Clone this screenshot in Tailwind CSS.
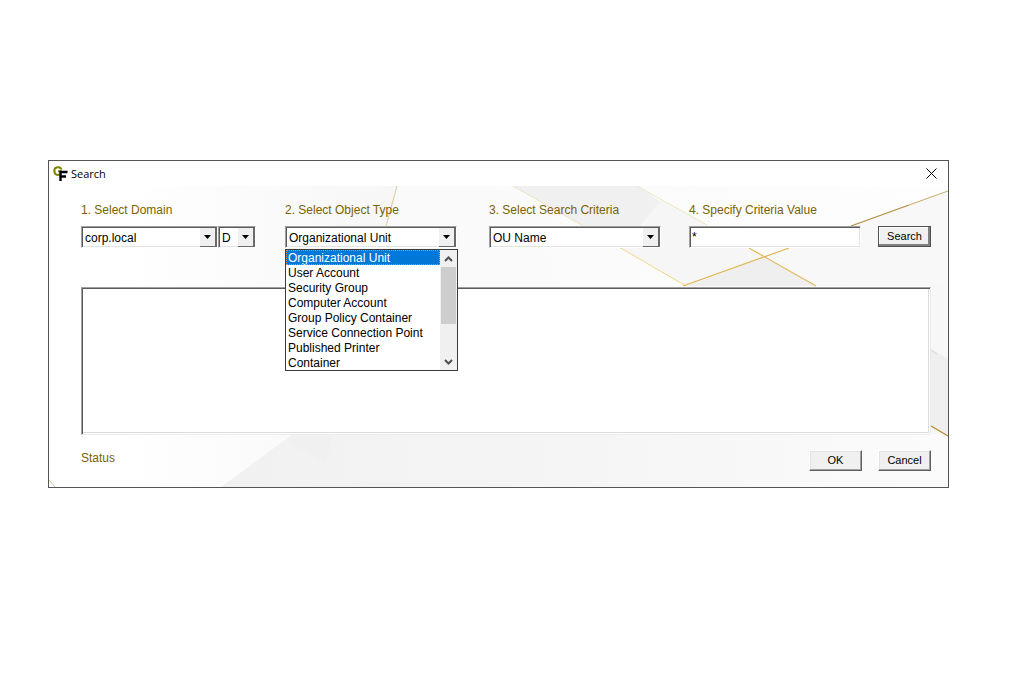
<!doctype html>
<html lang="en">
  <head>
    <meta charset="UTF-8" />
    <meta name="viewport" content="width=device-width, initial-scale=1.0" />
    <title>Search</title>
    <script src="https://cdn.jsdelivr.net/npm/@tailwindcss/browser@4"></script>
  </head>
  <body class="bg-white pt-40 pl-12 pr-[60px] font-['Liberation_Sans',Arial,sans-serif] text-[12px] leading-4 text-black">
    <main class="border border-[#555558] bg-white">
      <header class="flex h-[25px] items-center justify-between pl-1 pr-[11px]">
        <div class="flex items-center gap-[3px]">
          <svg class="h-4 w-[15px]" viewBox="0 0 15 16" fill="none">
            <path d="M8.500 3.500C7.500 0.300 1.300 0.300 1.300 4.800C1.300 9 5 9.500 6.500 8.200M5 5.300H9" stroke="#808000" stroke-width="2" />
            <path d="M7.500 15V6H14.500M7.500 10.500H13" stroke="#000" stroke-width="2.400" />
          </svg>
          <h1 class="font-['Open_Sans','Noto_Sans',sans-serif] text-[11px]">Search</h1>
        </div>
        <button aria-label="Close" class="size-[11px]">
          <svg class="size-[11px]" viewBox="0 0 11 11" stroke="#000" fill="none"><path d="M0.500 0.500L10.500 10.500M10.500 0.500L0.500 10.500" /></svg>
        </button>
      </header>

      <form class="relative pt-4 pr-[17px] pb-4 pl-8" onsubmit="return false">
        <!-- backdrop facets -->
        <svg class="absolute inset-0 h-full w-full" viewBox="0 0 899 301" preserveAspectRatio="none" fill="none" aria-hidden="true">
          <defs>
            <linearGradient id="fade"><stop offset="0.080" stop-color="#fff" /><stop offset="0.400" stop-color="#f6f6f6" /></linearGradient>
            <linearGradient id="mid"><stop offset="0" stop-color="#f9f9f9" /><stop offset="1" stop-color="#fefefe" /></linearGradient>
            <linearGradient id="floor"><stop offset="0" stop-color="#f1f1f1" /><stop offset="0.500" stop-color="#f5f5f5" /><stop offset="1" stop-color="#fbfbfb" /></linearGradient>
          </defs>
          <path d="M0 0H899V301H0Z" fill="url(#fade)" />
          <path d="M348 0H899V110H320Z" fill="url(#mid)" />
          <path d="M464 0H589L612 16L591 40H534Z" fill="#f0f0f0" />
          <path d="M612 14L715 71L637 100L550 50L591 40Z" fill="#f6f6f6" />
          <path d="M637 100L715 71L767 100Z" fill="#efefef" />
          <path d="M899 5L715 71L767 100H899Z" fill="#f8f8f8" />
          <path d="M880 100H899V170L880 162Z" fill="#f7f7f7" />
          <path d="M880 162L899 173V250L880 240Z" fill="#efefef" />
          <path d="M244 248H899V301H172Z" fill="url(#floor)" />
          <path d="M244 248H284L277 277L238 256Z" fill="#f0f0f0" />
          <path d="M348 0L337 40" stroke="#dcc99b" />
          <path d="M464 0L550 49" stroke="#eee3c2" />
          <path d="M570 61L637 100" stroke="#f0d988" />
          <path d="M588 0L658 39" stroke="#efe5c0" />
          <path d="M700 62L767 100" stroke="#e3b95a" stroke-width="1.200" />
          <path d="M634 100L740 62" stroke="#e0b450" stroke-width="1.200" />
          <path d="M802 40L860 19" stroke="#b48c3c" stroke-width="1.200" />
          <path d="M860 19L899 5" stroke="#c9a968" />
          <path d="M882 164L888 168" stroke="#ddd8c8" />
          <path d="M882 240L899 250" stroke="#b98a2c" stroke-width="1.200" />
          <path d="M0 294L6 301" stroke="#d8c8a0" />
        </svg>

        <div class="relative flex items-end">
          <div class="min-w-0 flex-[175_1_0%]">
            <label for="domain" class="block text-[#7a6200]">1. Select Domain</label>
            <div class="mt-2 flex">
              <div class="relative min-w-0 flex-1">
                <select id="domain" class="block h-[22px] w-full appearance-none border border-t-[#a0a0a0] border-l-[#a0a0a0] border-r-white border-b-white bg-white pt-0.5 pl-[3px] shadow-[inset_1px_1px_0_#5a5a5a,inset_-1px_-1px_0_#e3e3e3] outline-none">
                  <option>corp.local</option>
                </select>
                <span class="pointer-events-none absolute top-0.5 right-px bottom-px grid w-[17px] place-items-center border-r-2 border-b border-r-[#696969] border-b-[#696969] bg-[#f0f0f0]">
                  <svg class="h-1 w-[7px]" viewBox="0 0 7 4"><path d="M0 0H7L3.500 4Z" /></svg>
                </span>
              </div>
              <div class="relative w-[38px]">
                <select aria-label="Domain kind" class="block h-[22px] w-full appearance-none border border-t-[#a0a0a0] border-l-[#a0a0a0] border-r-white border-b-white bg-white pt-0.5 pl-[3px] shadow-[inset_1px_1px_0_#5a5a5a,inset_-1px_-1px_0_#e3e3e3] outline-none">
                  <option>D</option>
                </select>
                <span class="pointer-events-none absolute top-0.5 right-px bottom-px grid w-[17px] place-items-center border-r-2 border-b border-r-[#696969] border-b-[#696969] bg-[#f0f0f0]">
                  <svg class="h-1 w-[7px]" viewBox="0 0 7 4"><path d="M0 0H7L3.500 4Z" /></svg>
                </span>
              </div>
            </div>
          </div>

          <div class="ml-[29px] min-w-0 flex-[172_1_0%]">
            <label for="objectType" class="block text-[#7a6200]">2. Select Object Type</label>
            <div class="relative mt-2">
              <select id="objectType" class="block h-[22px] w-full appearance-none border border-t-[#a0a0a0] border-l-[#a0a0a0] border-r-white border-b-white bg-white pt-0.5 pl-[3px] shadow-[inset_1px_1px_0_#5a5a5a,inset_-1px_-1px_0_#e3e3e3] outline-none">
                <option>Organizational Unit</option>
              </select>
              <span class="pointer-events-none absolute top-0.5 right-px bottom-px grid w-[17px] place-items-center border-r-2 border-b border-r-[#696969] border-b-[#696969] bg-[#f0f0f0]">
                <svg class="h-1 w-[7px]" viewBox="0 0 7 4"><path d="M0 0H7L3.500 4Z" /></svg>
              </span>
              <div class="absolute top-[23px] left-0 z-10 flex w-[173px] border border-[#3c3c3c] bg-white">
                <ul role="listbox" aria-label="Object types" class="flex-1 leading-[14px] whitespace-nowrap">
                  <li role="option" aria-selected="true" class="bg-[#0078d7] pt-px pl-0.5 text-white outline-1 outline-dotted -outline-offset-1 outline-[#ff8728]">Organizational Unit</li>
                  <li role="option" class="pt-px pl-0.5">User Account</li>
                  <li role="option" class="pt-px pl-0.5">Security Group</li>
                  <li role="option" class="pt-px pl-0.5">Computer Account</li>
                  <li role="option" class="pt-px pl-0.5">Group Policy Container</li>
                  <li role="option" class="pt-px pl-0.5">Service Connection Point</li>
                  <li role="option" class="pt-px pl-0.5">Published Printer</li>
                  <li role="option" class="pt-px pl-0.5">Container</li>
                </ul>
                <div class="flex w-[17px] flex-col items-center bg-[#f0f0f0]">
                  <svg class="h-[17px] w-[9px]" viewBox="0 0 9 17" fill="none" stroke="#505050" stroke-width="2"><path d="M1 11L4.500 7.500L8 11" /></svg>
                  <div class="h-[57px] w-[15px] bg-[#cdcdcd]"></div>
                  <svg class="mt-auto h-[17px] w-[9px]" viewBox="0 0 9 17" fill="none" stroke="#505050" stroke-width="2"><path d="M1 7L4.500 10.500L8 7" /></svg>
                </div>
              </div>
            </div>
          </div>

          <div class="ml-8 min-w-0 flex-[172_1_0%]">
            <label for="criteria" class="block text-[#7a6200]">3. Select Search Criteria</label>
            <div class="relative mt-2">
              <select id="criteria" class="block h-[22px] w-full appearance-none border border-t-[#a0a0a0] border-l-[#a0a0a0] border-r-white border-b-white bg-white pt-0.5 pl-[3px] shadow-[inset_1px_1px_0_#5a5a5a,inset_-1px_-1px_0_#e3e3e3] outline-none">
                <option>OU Name</option>
              </select>
              <span class="pointer-events-none absolute top-0.5 right-px bottom-px grid w-[17px] place-items-center border-r-2 border-b border-r-[#696969] border-b-[#696969] bg-[#f0f0f0]">
                <svg class="h-1 w-[7px]" viewBox="0 0 7 4"><path d="M0 0H7L3.500 4Z" /></svg>
              </span>
            </div>
          </div>

          <div class="ml-7 min-w-0 flex-[172_1_0%]">
            <label for="value" class="block text-[#7a6200]">4. Specify Criteria Value</label>
            <input id="value" type="text" value="*" class="mt-2 block h-[22px] w-full border border-t-[#a0a0a0] border-l-[#a0a0a0] border-r-white border-b-white bg-white pl-0.5 shadow-[inset_1px_1px_0_#5a5a5a,inset_-1px_-1px_0_#e3e3e3] outline-none" />
          </div>

          <button type="submit" class="mb-px ml-[17px] h-[21px] w-[53px] border border-[#505050] bg-[#f0f0f0] text-[11px] leading-none shadow-[inset_-2px_-2px_0_#808080,inset_1px_1px_0_#fff]">Search</button>
        </div>

        <textarea aria-label="Results" readonly class="relative mt-[39px] block h-[148px] w-full resize-none border border-t-[#a0a0a0] border-l-[#a0a0a0] border-r-[#ececec] border-b-[#ececec] bg-white shadow-[inset_1px_1px_0_#5a5a5a,inset_-1px_-1px_0_#fff,inset_-2px_-2px_0_#dcdcdc] outline-none"></textarea>

        <div class="relative mt-[15px] flex h-[21px] items-start">
          <p class="mr-auto text-[#7a6200]">Status</p>
          <button type="button" class="h-[21px] w-[53px] border border-t-white border-l-white border-r-[#606060] border-b-[#606060] bg-[#f0f0f0] text-[11px] leading-none shadow-[inset_-1px_-1px_0_#a0a0a0,inset_1px_1px_0_#e3e3e3]">OK</button>
          <button type="button" class="ml-4 h-[21px] w-[53px] border border-t-white border-l-white border-r-[#606060] border-b-[#606060] bg-[#f0f0f0] text-[11px] leading-none shadow-[inset_-1px_-1px_0_#a0a0a0,inset_1px_1px_0_#e3e3e3]">Cancel</button>
        </div>
      </form>
    </main>
  </body>
</html>
